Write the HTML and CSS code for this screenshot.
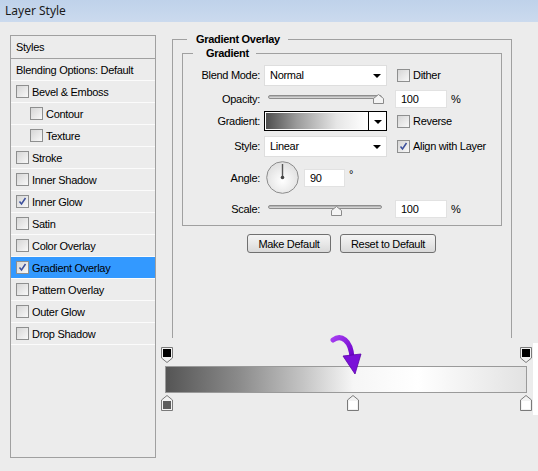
FILE: index.html
```html
<!DOCTYPE html>
<html>
<head>
<meta charset="utf-8">
<link rel="stylesheet" href="styles.css">
</head>
<body>
<div class="titlebar">Layer Style</div>
<div class="main">
  <div class="sidebar">
    <div class="row head">Styles</div>
    <div class="row">Blending Options: Default</div>
    <div class="row"><span class="cb"></span>Bevel &amp; Emboss</div>
    <div class="row sub"><span class="cb"></span>Contour</div>
    <div class="row sub"><span class="cb"></span>Texture</div>
    <div class="row"><span class="cb"></span>Stroke</div>
    <div class="row"><span class="cb"></span>Inner Shadow</div>
    <div class="row"><span class="cb on"><svg viewBox="0 0 13 13" width="13" height="13"><path d="M3.5 6.5 L5.5 9 L9.5 3" fill="none" stroke="#3b4f9c" stroke-width="1.5"/></svg></span>Inner Glow</div>
    <div class="row"><span class="cb"></span>Satin</div>
    <div class="row"><span class="cb"></span>Color Overlay</div>
    <div class="row sel"><span class="cb on"><svg viewBox="0 0 13 13" width="13" height="13"><path d="M3.5 6.5 L5.5 9 L9.5 3" fill="none" stroke="#3b4f9c" stroke-width="1.5"/></svg></span>Gradient Overlay</div>
    <div class="row"><span class="cb"></span>Pattern Overlay</div>
    <div class="row"><span class="cb"></span>Outer Glow</div>
    <div class="row"><span class="cb"></span>Drop Shadow</div>
  </div>
  <div class="content">
    <fieldset class="outer">
      <legend>Gradient Overlay</legend>
      <fieldset class="inner">
        <legend>Gradient</legend>
        <div class="frow r1">
          <span class="lbl">Blend Mode:</span>
          <div class="select">Normal<span class="arrow"></span></div>
          <span class="chk"><span class="cb"></span>Dither</span>
        </div>
        <div class="frow r2">
          <span class="lbl">Opacity:</span>
          <div class="slider">
            <div class="track"></div>
            <svg class="thumb t-op" viewBox="0 0 11 10" width="11" height="10"><path d="M5.5 0.5 L10.5 4.5 V9.5 H0.5 V4.5 Z" fill="#f4f4f4" stroke="#8a8a8a"/></svg>
          </div>
          <div class="num">100</div><span class="unit">%</span>
        </div>
        <div class="frow r3">
          <span class="lbl">Gradient:</span>
          <div class="gswatch"><div class="gfill"></div><div class="gdrop"><span class="arrow"></span></div></div>
          <span class="chk"><span class="cb"></span>Reverse</span>
        </div>
        <div class="frow r4">
          <span class="lbl">Style:</span>
          <div class="select">Linear<span class="arrow"></span></div>
          <span class="chk"><span class="cb on"><svg viewBox="0 0 13 13" width="13" height="13"><path d="M3.5 6.5 L5.5 9 L9.5 3" fill="none" stroke="#3b4f9c" stroke-width="1.5"/></svg></span>Align with Layer</span>
        </div>
        <div class="frow r5">
          <span class="lbl">Angle:</span>
          <svg class="dial" viewBox="0 0 33 33" width="33" height="33">
            <defs><radialGradient id="dg" cx="0.5" cy="0.6" r="0.6"><stop offset="0" stop-color="#ffffff"/><stop offset="1" stop-color="#dedede"/></radialGradient></defs>
            <circle cx="16.5" cy="16.5" r="15.8" fill="url(#dg)" stroke="#8c8c8c"/>
            <line x1="16.5" y1="3" x2="16.5" y2="16" stroke="#555" stroke-width="1.4"/>
            <circle cx="16.5" cy="16.5" r="1.8" fill="#444"/>
          </svg>
          <div class="num deg">90</div><span class="unit">°</span>
        </div>
        <div class="frow r6">
          <span class="lbl">Scale:</span>
          <div class="slider">
            <div class="track"></div>
            <svg class="thumb t-sc" viewBox="0 0 11 10" width="11" height="10"><path d="M5.5 0.5 L10.5 4.5 V9.5 H0.5 V4.5 Z" fill="#f4f4f4" stroke="#8a8a8a"/></svg>
          </div>
          <div class="num">100</div><span class="unit">%</span>
        </div>
      </fieldset>
      <div class="buttons">
        <button class="btn b1">Make Default</button>
        <button class="btn b2">Reset to Default</button>
      </div>
    </fieldset>
    <div class="editor">
      <div class="stops top">
        <svg class="stop" style="left:5px" viewBox="0 0 12 16" width="12" height="16"><path d="M0.5 0.5 H11.5 V11 L6 15.5 L0.5 11 Z" fill="#f2f2f2" stroke="#7a7a7a"/><rect x="2" y="2" width="8" height="8" fill="#000"/></svg>
        <svg class="stop" style="left:364px" viewBox="0 0 12 16" width="12" height="16"><path d="M0.5 0.5 H11.5 V11 L6 15.5 L0.5 11 Z" fill="#f2f2f2" stroke="#7a7a7a"/><rect x="2" y="2" width="8" height="8" fill="#000"/></svg>
      </div>
      <div class="gbar"></div>
      <div class="stops bottom">
        <svg class="stop" style="left:5px" viewBox="0 0 12 16" width="12" height="16"><path d="M6 0.5 L11.5 5 V15.5 H0.5 V5 Z" fill="#f2f2f2" stroke="#7a7a7a"/><rect x="2" y="6" width="8" height="8" fill="#5c5c5c"/></svg>
        <svg class="stop" style="left:191px" viewBox="0 0 12 16" width="12" height="16"><path d="M6 0.5 L11.5 5 V15.5 H0.5 V5 Z" fill="#f2f2f2" stroke="#7a7a7a"/><rect x="2" y="6" width="8" height="8" fill="#fff"/></svg>
        <svg class="stop" style="left:364px" viewBox="0 0 12 16" width="12" height="16"><path d="M6 0.5 L11.5 5 V15.5 H0.5 V5 Z" fill="#f2f2f2" stroke="#7a7a7a"/><rect x="2" y="6" width="8" height="8" fill="#fff"/></svg>
      </div>
      <div class="strip"></div>
      <svg class="pointer" viewBox="0 0 40 52" width="40" height="52">
        <defs><linearGradient id="pg" x1="0" y1="0" x2="1" y2="1"><stop offset="0" stop-color="#a53cf0"/><stop offset="1" stop-color="#6a00c8"/></linearGradient></defs>
        <path d="M8 14 C16 8, 26 14, 27 32" fill="none" stroke="url(#pg)" stroke-width="5" stroke-linecap="round"/>
        <path d="M18 30 L36 28 L30 48 Z" fill="#7a10d8" stroke="#5a00a8" stroke-width="0.8" stroke-linejoin="round"/>
      </svg>
    </div>
  </div>
</div>
</body>
</html>
```
FILE: styles.css
```css
html, body {
  margin: 0;
  padding: 0;
}
body {
  width: 538px;
  height: 471px;
  overflow: hidden;
  background: #ececec;
  font-family: "Liberation Sans", Arial, sans-serif;
  font-size: 11px;
  letter-spacing: -0.3px;
  color: #000;
}
.titlebar {
  height: 22px;
  line-height: 22px;
  padding-left: 5px;
  font-family: "Noto Sans", "Liberation Sans", sans-serif;
  font-size: 12px;
  letter-spacing: 0;
  color: #1a1a1a;
  background: linear-gradient(#bfd2ea, #cbdaee);
}
.main {
  display: flex;
  padding-top: 11px;
}
.sidebar {
  margin-top: 2px;
  margin-left: 10px;
  width: 146px;
  height: 423px;
  box-sizing: border-box;
  border: 1px solid #a0a0a0;
}
.row {
  height: 22px;
  box-sizing: border-box;
  border-bottom: 1px solid #fbfbfb;
  display: flex;
  align-items: center;
  padding-left: 5px;
}
.row.head {
  height: 23px;
  border-bottom: 1px solid #a0a0a0;
}
.row.sub {
  padding-left: 19px;
}
.row.sel {
  background: #3399ff;
}
.cb {
  display: inline-block;
  width: 13px;
  height: 13px;
  box-sizing: border-box;
  border: 1px solid #8e8f8f;
  background: linear-gradient(135deg, #d6d6d6, #f8f8f8);
  margin-right: 3px;
  position: relative;
  flex: none;
}
.cb svg {
  position: absolute;
  left: -1px;
  top: -1px;
}
.content {
  width: 382px;
}
fieldset {
  margin: 0;
  box-sizing: border-box;
}
legend {
  font-weight: bold;
  line-height: 13px;
}
.outer {
  margin-left: 16px;
  width: 340px;
  height: 305px;
  padding: 1px 9px 0 9px;
  border: 1px solid #a0a0a0;
  border-bottom: none;
}
.outer > legend {
  margin-left: 5px;
  padding: 0 8px 0 9px;
}
.inner {
  width: 320px;
  height: 179px;
  padding: 4px 0 0 0;
  border: 1px solid #a0a0a0;
}
.inner > legend {
  margin-left: 10px;
  padding: 0 7px 0 13px;
}
.frow {
  display: flex;
  align-items: center;
}
.lbl {
  width: 77px;
  text-align: right;
  margin-right: 4px;
  flex: none;
}
.r1 { height: 22px; }
.r2 { height: 18px; margin-top: 4px; }
.r3 { height: 20px; margin-top: 3px; }
.r4 { height: 22px; margin-top: 4px; }
.r5 { height: 33px; margin-top: 4px; }
.r6 { height: 18px; margin-top: 6px; }
.select {
  width: 123px;
  height: 21px;
  box-sizing: border-box;
  background: #fff;
  border: 1px solid #dedede;
  display: flex;
  align-items: center;
  padding-left: 5px;
  flex: none;
}
.arrow {
  width: 0;
  height: 0;
  border-left: 4px solid transparent;
  border-right: 4px solid transparent;
  border-top: 4px solid #000;
  margin-left: auto;
  margin-right: 5px;
  margin-top: 2px;
}
.chk {
  display: flex;
  align-items: center;
  margin-left: 10px;
}
.chk .cb {
  margin-right: 3px;
}
.slider {
  position: relative;
  width: 114px;
  height: 18px;
  margin-left: 4px;
  margin-right: 5px;
  flex: none;
  align-self: flex-start;
}
.track {
  margin-top: 5px;
  height: 4px;
  box-sizing: border-box;
  border: 1px solid #8e8e8e;
  border-radius: 2px;
  background: linear-gradient(#a8a8a8, #e2e2e2);
}
.thumb {
  position: absolute;
  top: 4px;
}
.t-op { left: 105px; }
.t-sc { left: 63px; top: 6px; }
.num {
  width: 52px;
  height: 18px;
  box-sizing: border-box;
  background: #fff;
  border: 1px solid #e2e2e2;
  padding-left: 5px;
  display: flex;
  align-items: center;
  margin-left: 8px;
  flex: none;
}
.num.deg {
  width: 41px;
  margin-left: 5px;
}
.unit {
  margin-left: 4px;
}
.r5 .unit {
  margin-top: -8px;
}
.gswatch {
  width: 123px;
  height: 20px;
  box-sizing: border-box;
  border: 1px solid #000;
  display: flex;
  flex: none;
  background: #fff;
}
.gfill {
  flex: 1;
  margin: 1px;
  background: linear-gradient(90deg, #4e4e4e, #9a9a9a 30%, #e6e6e6 70%, #ffffff);
}
.gdrop {
  width: 17px;
  border-left: 1px solid #000;
  display: flex;
  align-items: center;
  background: #fff;
}
.gdrop .arrow {
  margin: 1px auto 0;
}
.dial {
  margin-left: 2px;
  flex: none;
}
.buttons {
  display: flex;
  margin-top: 8px;
  margin-left: 65px;
  gap: 9px;
}
.btn {
  height: 19px;
  padding: 0;
  border: 1px solid #707070;
  border-radius: 3px;
  background: linear-gradient(#f4f4f4, #e8e8e8 50%, #d9d9d9);
  font-family: "Liberation Sans", Arial, sans-serif;
  font-size: 11px;
  letter-spacing: -0.3px;
  color: #000;
}
.b1 { width: 84px; }
.b2 { width: 96px; }
.editor {
  position: relative;
  padding-top: 9px;
}
.stops {
  position: relative;
  height: 16px;
}
.stop {
  position: absolute;
  top: 0;
}
.gbar {
  margin-top: 3px;
  margin-left: 9px;
  width: 362px;
  height: 27px;
  box-sizing: border-box;
  border: 1px solid #9a9a9a;
  background: linear-gradient(90deg, #555555, #8a8a8a 20%, #c4c4c4 38%, #f6f6f6 52%, #ffffff 70%, #e2e2e2 100%);
}
.stops.bottom {
  margin-top: 2px;
}
.strip {
  position: absolute;
  left: 377px;
  top: 5px;
  width: 5px;
  height: 72px;
  background: #fff;
}
.pointer {
  position: absolute;
  left: 169px;
  top: -12px;
}
```
